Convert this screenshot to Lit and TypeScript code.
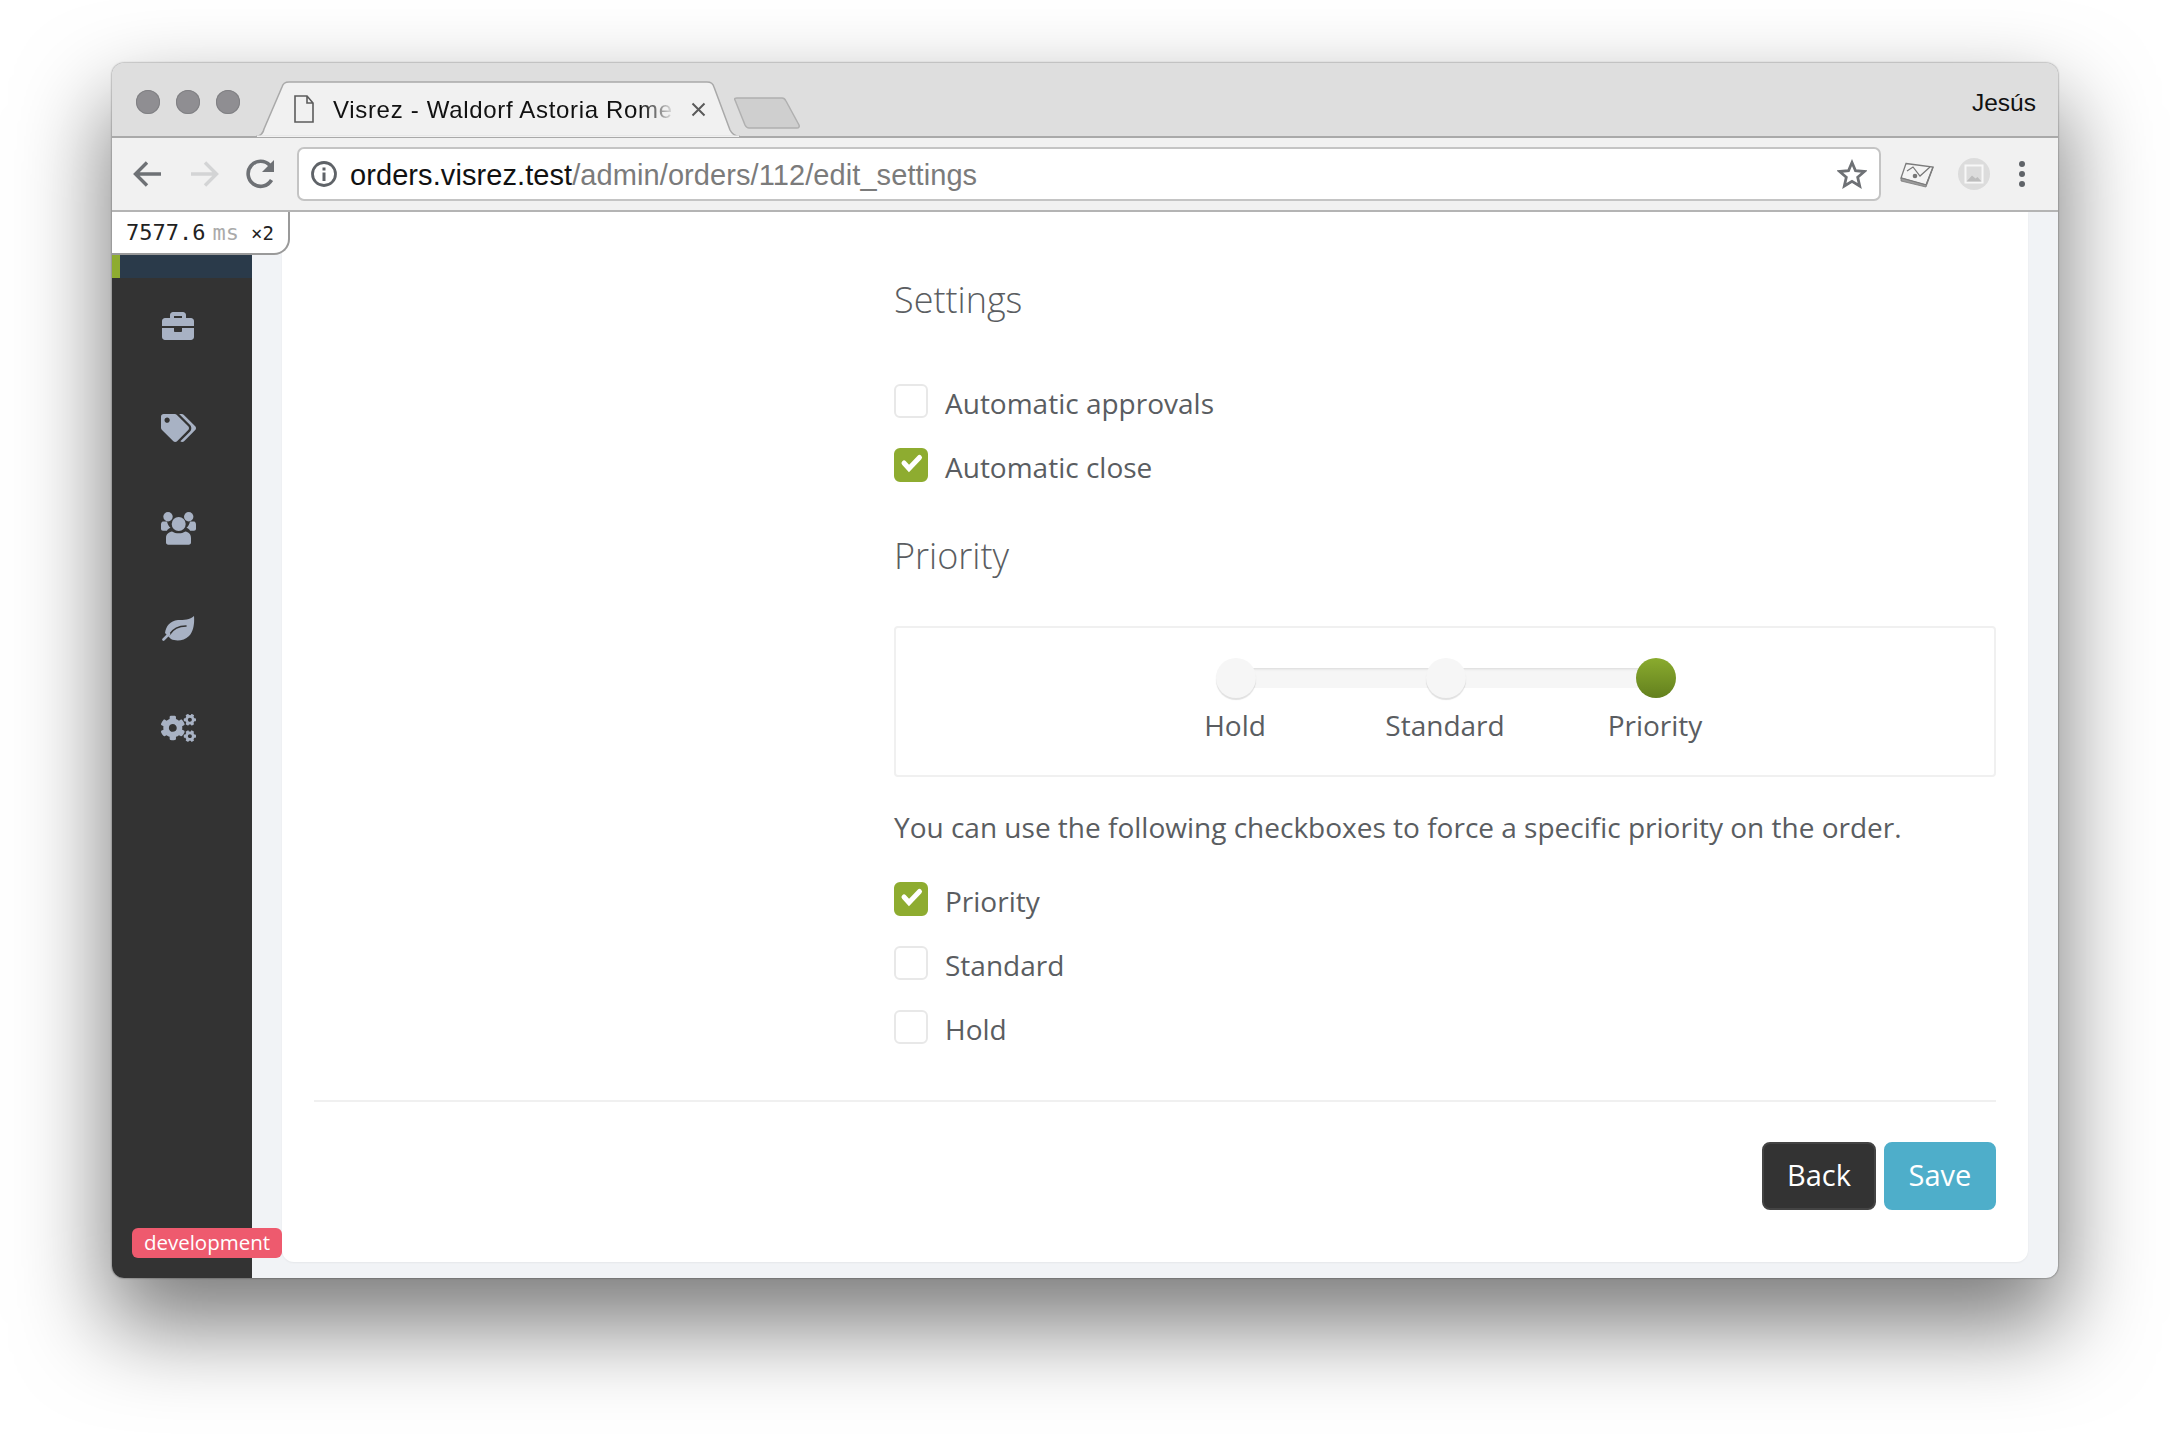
import { LitElement, html, css } from "lit";
import { customElement } from "lit/decorators.js";

const check = html`<svg class="chk" viewBox="0 0 34 34"><path d="M10 15l5 5.500L25.500 9.500" fill="none" stroke="#fff" stroke-width="5" stroke-linecap="round"/></svg>`;

@customElement("app-root")
export class AppRoot extends LitElement {
  static styles = css`
    :host { display: block; height: 1438px; overflow: hidden; background: #fff; padding: 63px 0 0 112px; box-sizing: border-box; font-family: "Open Sans", sans-serif; color: #5a5d61; }
    .window { width: 1946px; height: 1215px; border-radius: 12px; overflow: hidden; display: flex; flex-direction: column; background: #f1f3f6; box-shadow: 0 44px 90px 4px rgba(0,0,0,.52), 0 0 2px rgba(0,0,0,.6); }
    .tabstrip { height: 75px; box-sizing: border-box; flex: none; background: #dedede; border-bottom: 2px solid #a9a9a9; display: flex; font-family: "Liberation Sans", sans-serif; position: relative; }
    .lights { display: flex; gap: 16px; padding: 27px 0 0 24px; width: 144px; box-sizing: border-box; flex: none; }
    .lights i { width: 24px; height: 24px; border-radius: 50%; background: #8f8e92; box-shadow: inset 0 0 0 1px #808084; }
    .tab { width: 484px; height: 56px; margin-top: 18px; position: relative; flex: none; display: flex; align-items: center; }
    .tabshape { position: absolute; left: 0; top: 0; width: 484px; height: 56px; }
    .docicon { position: relative; margin-left: 38px; width: 20px; height: 28px; flex: none; }
    .tabtitle { position: relative; margin-left: 19px; padding-top: 2px; width: 342px; white-space: nowrap; overflow: hidden; font-size: 24px; letter-spacing: .68px; color: #111; -webkit-mask-image: linear-gradient(90deg, #000 90%, transparent 100%); mask-image: linear-gradient(90deg, #000 90%, transparent 100%); }
    .x { position: relative; margin-left: 16px; width: 15px; height: 15px; flex: none; }
    .newtab { width: 66px; height: 32px; margin: 34px 0 0 -6px; flex: none; }
    .user { margin-left: auto; padding: 26px 22px 0 0; font-size: 24.500px; color: #111; }
    .toolbar { height: 74px; box-sizing: border-box; flex: none; background: #f1f1f1; border-bottom: 2px solid #b4b4b4; display: flex; align-items: center; position: relative; }
    .nav { width: 36px; height: 36px; flex: none; }
    .nav.back { margin-left: 18px; }
    .nav.fwd { margin-left: 20px; }
    .nav.reload { margin-left: 21px; }
    .omni { margin-left: 18px; width: 1584px; height: 54px; box-sizing: border-box; background: #fff; border: 2px solid #c4c4c4; border-radius: 7px; display: flex; align-items: center; flex: none; font-family: "Liberation Sans", sans-serif; font-size: 29px; }
    .info { width: 28px; height: 28px; margin-left: 11px; flex: none; }
    .url { margin-left: 12px; padding-top: 2px; color: #111; white-space: nowrap; letter-spacing: .08px; }
    .url span { color: #7b7b7b; }
    .star { margin-left: auto; margin-right: 12px; width: 30px; height: 30px; }
    .ext { margin-left: 19px; width: 34px; height: 28px; flex: none; }
    .pic { margin-left: 24px; width: 32px; height: 32px; flex: none; }
    .dots { margin-left: 28px; width: 8px; height: 28px; flex: none; }
    .content { flex: 1; display: flex; position: relative; min-height: 0; }
    .timing { position: absolute; left: 0; top: 0; z-index: 2; width: 178px; height: 43px; box-sizing: border-box; background: #fff; border-right: 2px solid #9a9a9a; border-bottom: 2px solid #9a9a9a; border-radius: 0 0 16px 0; font-family: "DejaVu Sans Mono", monospace; font-size: 22px; color: #222; display: flex; align-items: center; padding: 0 0 0 14px; white-space: nowrap; }
    .timing .ms { color: #aaa; margin-left: 7px; }
    .timing .mul { font-size: 19px; margin-left: 12px; }
    .side { width: 140px; flex: none; background: #333; display: flex; flex-direction: column; position: relative; }
    .sidetop { height: 66px; background: #2a3a4a; flex: none; position: relative; }
    .progress { position: absolute; left: 0; bottom: 0; width: 8px; height: 23px; background: #8eac30; }
    .sidenav { margin-top: -2px; display: flex; flex-direction: column; padding-right: 8px; }
    .sideitem { height: 100px; display: flex; align-items: center; justify-content: center; }
    .sideitem:first-child { margin-bottom: 2px; }
    .sideitem svg { fill: #a8b2c4; display: block; }
    .env { position: absolute; left: 20px; bottom: 20px; z-index: 2; width: 150px; height: 30px; background: #ee5a6e; border-radius: 6px; color: #fff; font-size: 20.500px; line-height: 28px; text-align: center; }
    .main { flex: 1; padding: 0 30px 16px; display: flex; min-width: 0; }
    .card { flex: 1; background: #fff; border-radius: 0 0 12px 12px; box-shadow: 0 1px 2px rgba(0,0,0,.05); padding: 64px 32px 0; box-sizing: border-box; display: flex; flex-direction: column; }
    .form { padding-left: 580px; }
    h2 { margin: 0; font-weight: 300; font-size: 36px; line-height: 48px; color: #5a5d61; }
    .checks { margin-top: 45px; }
    .row { height: 64px; display: flex; align-items: center; font-size: 28px; line-height: 64px; }
    .lbl { padding-top: 4px; }
    .box { width: 34px; height: 34px; box-sizing: border-box; border: 2px solid #e8e8e8; border-radius: 6px; margin-right: 17px; flex: none; }
    .box.on { background: #8eac30; border-color: #8eac30; }
    .chk { display: block; width: 34px; height: 34px; margin: -2px; }
    h2.pri { margin-top: 35px; }
    .pribox { margin-top: 46px; height: 151px; box-sizing: border-box; border: 2px solid #f0f0f0; border-radius: 4px; display: flex; justify-content: center; padding-top: 30px; }
    .slider { display: flex; position: relative; width: 630px; align-self: flex-start; }
    .track { position: absolute; left: 106px; right: 104px; top: 10px; height: 20px; background: #f6f6f6; box-shadow: inset 0 3px 3px -2px rgba(0,0,0,.12); }
    .stop { width: 210px; display: flex; flex-direction: column; align-items: center; position: relative; font-size: 28px; line-height: 40px; }
    .handle { width: 40px; height: 40px; flex: none; border-radius: 50%; background: #f6f6f6; box-shadow: 0 2px 1px rgba(0,0,0,.12); margin: 0 0 7px 2px; }
    .handle.on { background: linear-gradient(#8aab2e, #63801e); box-shadow: none; }
    p { margin: 30px 0 20px; font-size: 28px; line-height: 40px; white-space: nowrap; }
    .divider { height: 2px; background: #f0f0f0; margin-top: 41px; flex: none; }
    .actions { display: flex; justify-content: flex-end; gap: 8px; margin-top: 40px; }
    .btn { height: 68px; box-sizing: border-box; border-radius: 8px; color: #fff; font-size: 29px; line-height: 62px; text-align: center; border: 2px solid transparent; }
    .btn.back { width: 114px; background: #333; border-color: #444; }
    .btn.save { width: 112px; background: #4eaeca; border-color: #4eaeca; }
  `;

  render() {
    return html`
      <div class="window">
        <div class="tabstrip">
          <div class="lights"><i></i><i></i><i></i></div>
          <div class="tab">
            <svg class="tabshape" viewBox="0 0 484 56"><path d="M0 55.500 C4 55 7 53 8 48 L26 6 C27 2 29 1 33 1 L451 1 C455 1 457 2 458 6 L474 49 C476 53 479 55 484 55.500 Z" fill="#f1f1f1" stroke="#a9a9a9" stroke-width="1.500"/><path d="M1 56H483" stroke="#f1f1f1" stroke-width="3"/></svg>
            <svg class="docicon" viewBox="0 0 20 28"><path d="M1 1h12l6 7v19H1zM13 1v7h6" fill="#f1f1f1" stroke="#5c5c5c" stroke-width="1.600"/></svg>
            <div class="tabtitle">Visrez - Waldorf Astoria Rome</div>
            <svg class="x" viewBox="0 0 15 15"><path d="M1.500 1.500l12 12M13.500 1.500l-12 12" stroke="#5a5a5a" stroke-width="2"/></svg>
          </div>
          <svg class="newtab" viewBox="0 0 66 32"><path d="M1 3C0 1.500 1.500 1 3 1h45c2 0 3 .8 4 3l13 24c.6 1.500 0 3-2 3H15c-2 0-3-1-4-3z" fill="#cfcfcf" stroke="#b0b0b0" stroke-width="1.500"/></svg>
          <div class="user">Jesús</div>
        </div>
        <div class="toolbar">
          <svg class="nav back" viewBox="0 0 36 36"><path d="M31 18H6M17 6.500L5.500 18 17 29.500" fill="none" stroke="#6e7175" stroke-width="3.400"/></svg>
          <svg class="nav fwd" viewBox="0 0 36 36"><path d="M5 18h25M19 6.500L30.500 18 19 29.500" fill="none" stroke="#d3d4d5" stroke-width="3.400"/></svg>
          <svg class="nav reload" viewBox="0 0 36 36"><path d="M28.500 24A12.500 12.500 0 1 1 26.800 9.300" fill="none" stroke="#6e7175" stroke-width="3.600"/><path d="M31 4v12H19z" fill="#6e7175"/></svg>
          <div class="omni">
            <svg class="info" viewBox="0 0 28 28"><circle cx="14" cy="14" r="11.500" fill="none" stroke="#5f6368" stroke-width="2.800"/><rect x="12.500" y="12.500" width="3" height="8.500" fill="#5f6368"/><rect x="12.500" y="7.500" width="3" height="3" fill="#5f6368"/></svg>
            <div class="url">orders.visrez.test<span>/admin/orders/112/edit_settings</span></div>
            <svg class="star" viewBox="0 0 30 30"><path d="M15 3.500l3.500 8.200 8.900.8-6.700 5.800 2 8.700-7.700-4.600-7.700 4.600 2-8.700-6.700-5.800 8.900-.8z" fill="none" stroke="#6e7175" stroke-width="2.800" stroke-linejoin="miter"/></svg>
          </div>
          <svg class="ext" viewBox="0 0 34 28"><path d="M6 3.500L33 7 26 25 1 18z" fill="#f4f4f4" stroke="#7b7b7b" stroke-width="1.300"/><path d="M1 18v3l25 6 7-19V7L26 25z" fill="#9c9c9c" stroke="#7b7b7b" stroke-width=".8"/><path d="M7 11l6-4 7 9 10-9" fill="none" stroke="#777" stroke-width="1.200"/><circle cx="15" cy="16" r="2.300" fill="#777"/></svg>
          <svg class="pic" viewBox="0 0 32 32"><circle cx="16" cy="16" r="16" fill="#dcdcdc"/><rect x="7" y="7" width="18" height="18" fill="#f7f7f7" stroke="#f7f7f7"/><rect x="8.500" y="8.500" width="15" height="15" fill="#dcdcdc"/><path d="M8.500 23.500l5.500-6 3.500 3 2-1.500 4 4.500z" fill="#bdbdbd"/></svg>
          <svg class="dots" viewBox="0 0 8 28"><circle cx="4" cy="4" r="3" fill="#5f6368"/><circle cx="4" cy="14" r="3" fill="#5f6368"/><circle cx="4" cy="24" r="3" fill="#5f6368"/></svg>
        </div>
        <div class="content">
          <div class="timing">7577.6<span class="ms">ms</span><span class="mul">×2</span></div>
          <aside class="side">
            <div class="sidetop"><div class="progress"></div></div>
            <nav class="sidenav">
              <div class="sideitem"><svg width="32" height="32" viewBox="0 0 512 512"><path d="M320 336c0 8.840-7.160 16-16 16h-96c-8.840 0-16-7.160-16-16v-48H0v144c0 25.600 22.400 48 48 48h416c25.600 0 48-22.400 48-48V288H320v48zm144-208h-80V80c0-25.600-22.400-48-48-48H176c-25.600 0-48 22.400-48 48v48H48c-25.600 0-48 22.400-48 48v80h512v-80c0-25.600-22.400-48-48-48zm-144 0H192V96h128v32z"/></svg></div>
              <div class="sideitem"><svg width="35" height="28" viewBox="0 0 640 512"><path d="M497.941 225.941L286.059 14.059A48 48 0 0 0 252.118 0H48C21.490 0 0 21.490 0 48v204.118a48 48 0 0 0 14.059 33.941l211.882 211.882c18.744 18.745 49.136 18.746 67.882 0l204.118-204.118c18.745-18.745 18.745-49.137 0-67.882zM112 160c-26.510 0-48-21.490-48-48s21.490-48 48-48 48 21.490 48 48-21.490 48-48 48zm513.941 133.823L421.823 497.941c-18.745 18.745-49.137 18.745-67.882 0l-.36-.36L527.640 323.522c16.999-16.999 26.360-39.600 26.360-63.640s-9.362-46.641-26.360-63.640L331.397 0h48.721a48 48 0 0 1 33.941 14.059l211.882 211.882c18.745 18.745 18.745 49.137 0 67.882z"/></svg></div>
              <div class="sideitem"><svg width="35" height="33" viewBox="0 0 35 33"><circle cx="7" cy="4.700" r="4.700"/><circle cx="27.700" cy="4.700" r="4.700"/><path d="M2 9.500h4c.6 3 2 5 3.500 6.300-1.500.6-3 1.500-3.600 3H2c-1.200 0-2-.8-2-2v-4c0-1.700.8-3.300 2-3.300zM33 9.500h-4c-.6 3-2 5-3.500 6.300 1.500.6 3 1.500 3.600 3H33c1.200 0 2-.8 2-2v-4c0-1.700-.8-3.300-2-3.300z"/><circle cx="17.700" cy="12" r="7"/><path d="M11 19.500c2 1.300 4.300 1.800 6.700 1.800s4.700-.5 6.700-1.800c3 .5 5.600 2.500 5.600 6.500v4.500c0 1.300-1 2.200-2.200 2.200H7.200C6 32.700 5 31.800 5 30.500V26c0-4 3-6 6-6.500z"/></svg></div>
              <div class="sideitem"><svg width="33" height="25" viewBox="0 0 33 25"><path d="M32 0C28 4 22 4 16 4 8 5 4 10 3 17l6 6c5 2.500 13 2 18-3C32 15 32.500 6 32 0z"/><path d="M7.500 18.500C11 13 17 10 24 10" fill="none" stroke="#333" stroke-width="1.600" stroke-linecap="round"/><path d="M1.500 23.500L7 18" fill="none" stroke="#a8b2c4" stroke-width="2.600" stroke-linecap="round"/></svg></div>
              <div class="sideitem"><svg width="35" height="28" viewBox="0 0 640 512"><path d="M512.100 191l-8.200 14.300c-3 5.300-9.400 7.500-15.100 5.400-11.800-4.400-22.600-10.700-32.100-18.600-4.600-3.800-5.800-10.500-2.800-15.700l8.200-14.300c-6.900-8-12.300-17.300-15.900-27.400h-16.500c-6 0-11.200-4.300-12.200-10.300-2-12-2.100-24.600 0-37.100 1-6 6.200-10.400 12.200-10.400h16.500c3.600-10.100 9-19.400 15.900-27.400l-8.200-14.300c-3-5.200-1.900-11.900 2.800-15.700 9.500-7.900 20.400-14.200 32.100-18.600 5.700-2.100 12.100.1 15.100 5.400l8.200 14.300c10.500-1.900 21.200-1.900 31.700 0L552 6.300c3-5.300 9.400-7.500 15.100-5.400 11.800 4.400 22.600 10.700 32.100 18.600 4.600 3.800 5.800 10.500 2.800 15.700l-8.200 14.300c6.900 8 12.300 17.300 15.900 27.400h16.500c6 0 11.200 4.300 12.200 10.300 2 12 2.100 24.600 0 37.100-1 6-6.200 10.400-12.200 10.400h-16.500c-3.600 10.100-9 19.400-15.900 27.400l8.200 14.300c3 5.200 1.900 11.900-2.800 15.700-9.500 7.900-20.400 14.200-32.100 18.600-5.700 2.100-12.100-.1-15.100-5.400l-8.200-14.300c-10.400 1.900-21.200 1.900-31.700 0zm-10.500-58.800c38.500 29.600 82.400-14.300 52.800-52.800-38.500-29.700-82.400 14.300-52.800 52.800zM386.300 286.100l33.700 16.800c10.100 5.800 14.500 18.100 10.500 29.100-8.900 24.200-26.400 46.400-42.600 65.800-7.400 8.900-20.200 11.100-30.300 5.300l-29.100-16.800c-16 13.700-34.600 24.600-54.900 31.700v33.600c0 11.600-8.300 21.600-19.700 23.600-24.600 4.200-50.400 4.400-75.900 0-11.500-2-20-11.900-20-23.600V418c-20.300-7.200-38.900-18-54.900-31.700L74 403c-10 5.800-22.900 3.600-30.300-5.300-16.200-19.400-33.300-41.600-42.200-65.700-4-10.900.4-23.200 10.500-29.100l33.300-16.800c-3.900-20.900-3.900-42.400 0-63.400L12 205.800c-10.100-5.800-14.600-18.100-10.500-29 8.900-24.200 26-46.400 42.200-65.800 7.400-8.900 20.200-11.100 30.300-5.300l29.100 16.800c16-13.700 34.600-24.600 54.900-31.700V57.100c0-11.500 8.200-21.500 19.600-23.500 24.600-4.200 50.500-4.400 76-.1 11.500 2 20 11.900 20 23.600v33.600c20.300 7.200 38.900 18 54.900 31.700l29.100-16.800c10-5.800 22.900-3.600 30.300 5.300 16.200 19.400 33.200 41.600 42.100 65.800 4 10.900.1 23.200-10 29.100l-33.700 16.800c3.900 21 3.900 42.500 0 63.500zm-117.600 21.100c59.200-77-28.700-164.900-105.700-105.700-59.200 77 28.700 164.900 105.700 105.700zm243.400 182.700l-8.200 14.300c-3 5.300-9.400 7.500-15.100 5.400-11.800-4.400-22.600-10.700-32.100-18.600-4.600-3.800-5.800-10.500-2.800-15.700l8.200-14.300c-6.900-8-12.300-17.300-15.900-27.400h-16.500c-6 0-11.200-4.300-12.200-10.300-2-12-2.100-24.600 0-37.100 1-6 6.200-10.400 12.200-10.400h16.500c3.600-10.100 9-19.400 15.900-27.400l-8.200-14.300c-3-5.200-1.900-11.900 2.800-15.700 9.500-7.900 20.400-14.200 32.100-18.600 5.700-2.100 12.100.1 15.100 5.400l8.200 14.300c10.500-1.900 21.200-1.900 31.700 0l8.200-14.300c3-5.300 9.400-7.500 15.100-5.400 11.800 4.400 22.600 10.700 32.100 18.600 4.600 3.800 5.800 10.500 2.800 15.700l-8.200 14.300c6.900 8 12.300 17.300 15.900 27.400h16.500c6 0 11.200 4.300 12.200 10.300 2 12 2.100 24.600 0 37.100-1 6-6.200 10.400-12.200 10.400h-16.500c-3.600 10.100-9 19.400-15.900 27.400l8.200 14.300c3 5.200 1.900 11.900-2.800 15.700-9.500 7.900-20.400 14.200-32.100 18.600-5.700 2.100-12.100-.1-15.100-5.400l-8.200-14.300c-10.400 1.900-21.200 1.900-31.700 0zM501.600 431c38.500 29.600 82.400-14.300 52.800-52.800-38.500-29.600-82.400 14.300-52.800 52.800z"/></svg></div>
            </nav>
            <div class="env">development</div>
          </aside>
          <main class="main">
            <section class="card">
              <div class="form">
                <h2>Settings</h2>
                <div class="checks">
                  <div class="row"><span class="box"></span><span class="lbl">Automatic approvals</span></div>
                  <div class="row"><span class="box on">${check}</span><span class="lbl">Automatic close</span></div>
                </div>
                <h2 class="pri">Priority</h2>
                <div class="pribox">
                  <div class="slider">
                    <div class="track"></div>
                    <div class="stop"><div class="handle"></div>Hold</div>
                    <div class="stop"><div class="handle"></div>Standard</div>
                    <div class="stop"><div class="handle on"></div>Priority</div>
                  </div>
                </div>
                <p>You can use the following checkboxes to force a specific priority on the order.</p>
                <div class="row"><span class="box on">${check}</span><span class="lbl">Priority</span></div>
                <div class="row"><span class="box"></span><span class="lbl">Standard</span></div>
                <div class="row"><span class="box"></span><span class="lbl">Hold</span></div>
              </div>
              <div class="divider"></div>
              <div class="actions"><div class="btn back">Back</div><div class="btn save">Save</div></div>
            </section>
          </main>
        </div>
      </div>
    `;
  }
}
